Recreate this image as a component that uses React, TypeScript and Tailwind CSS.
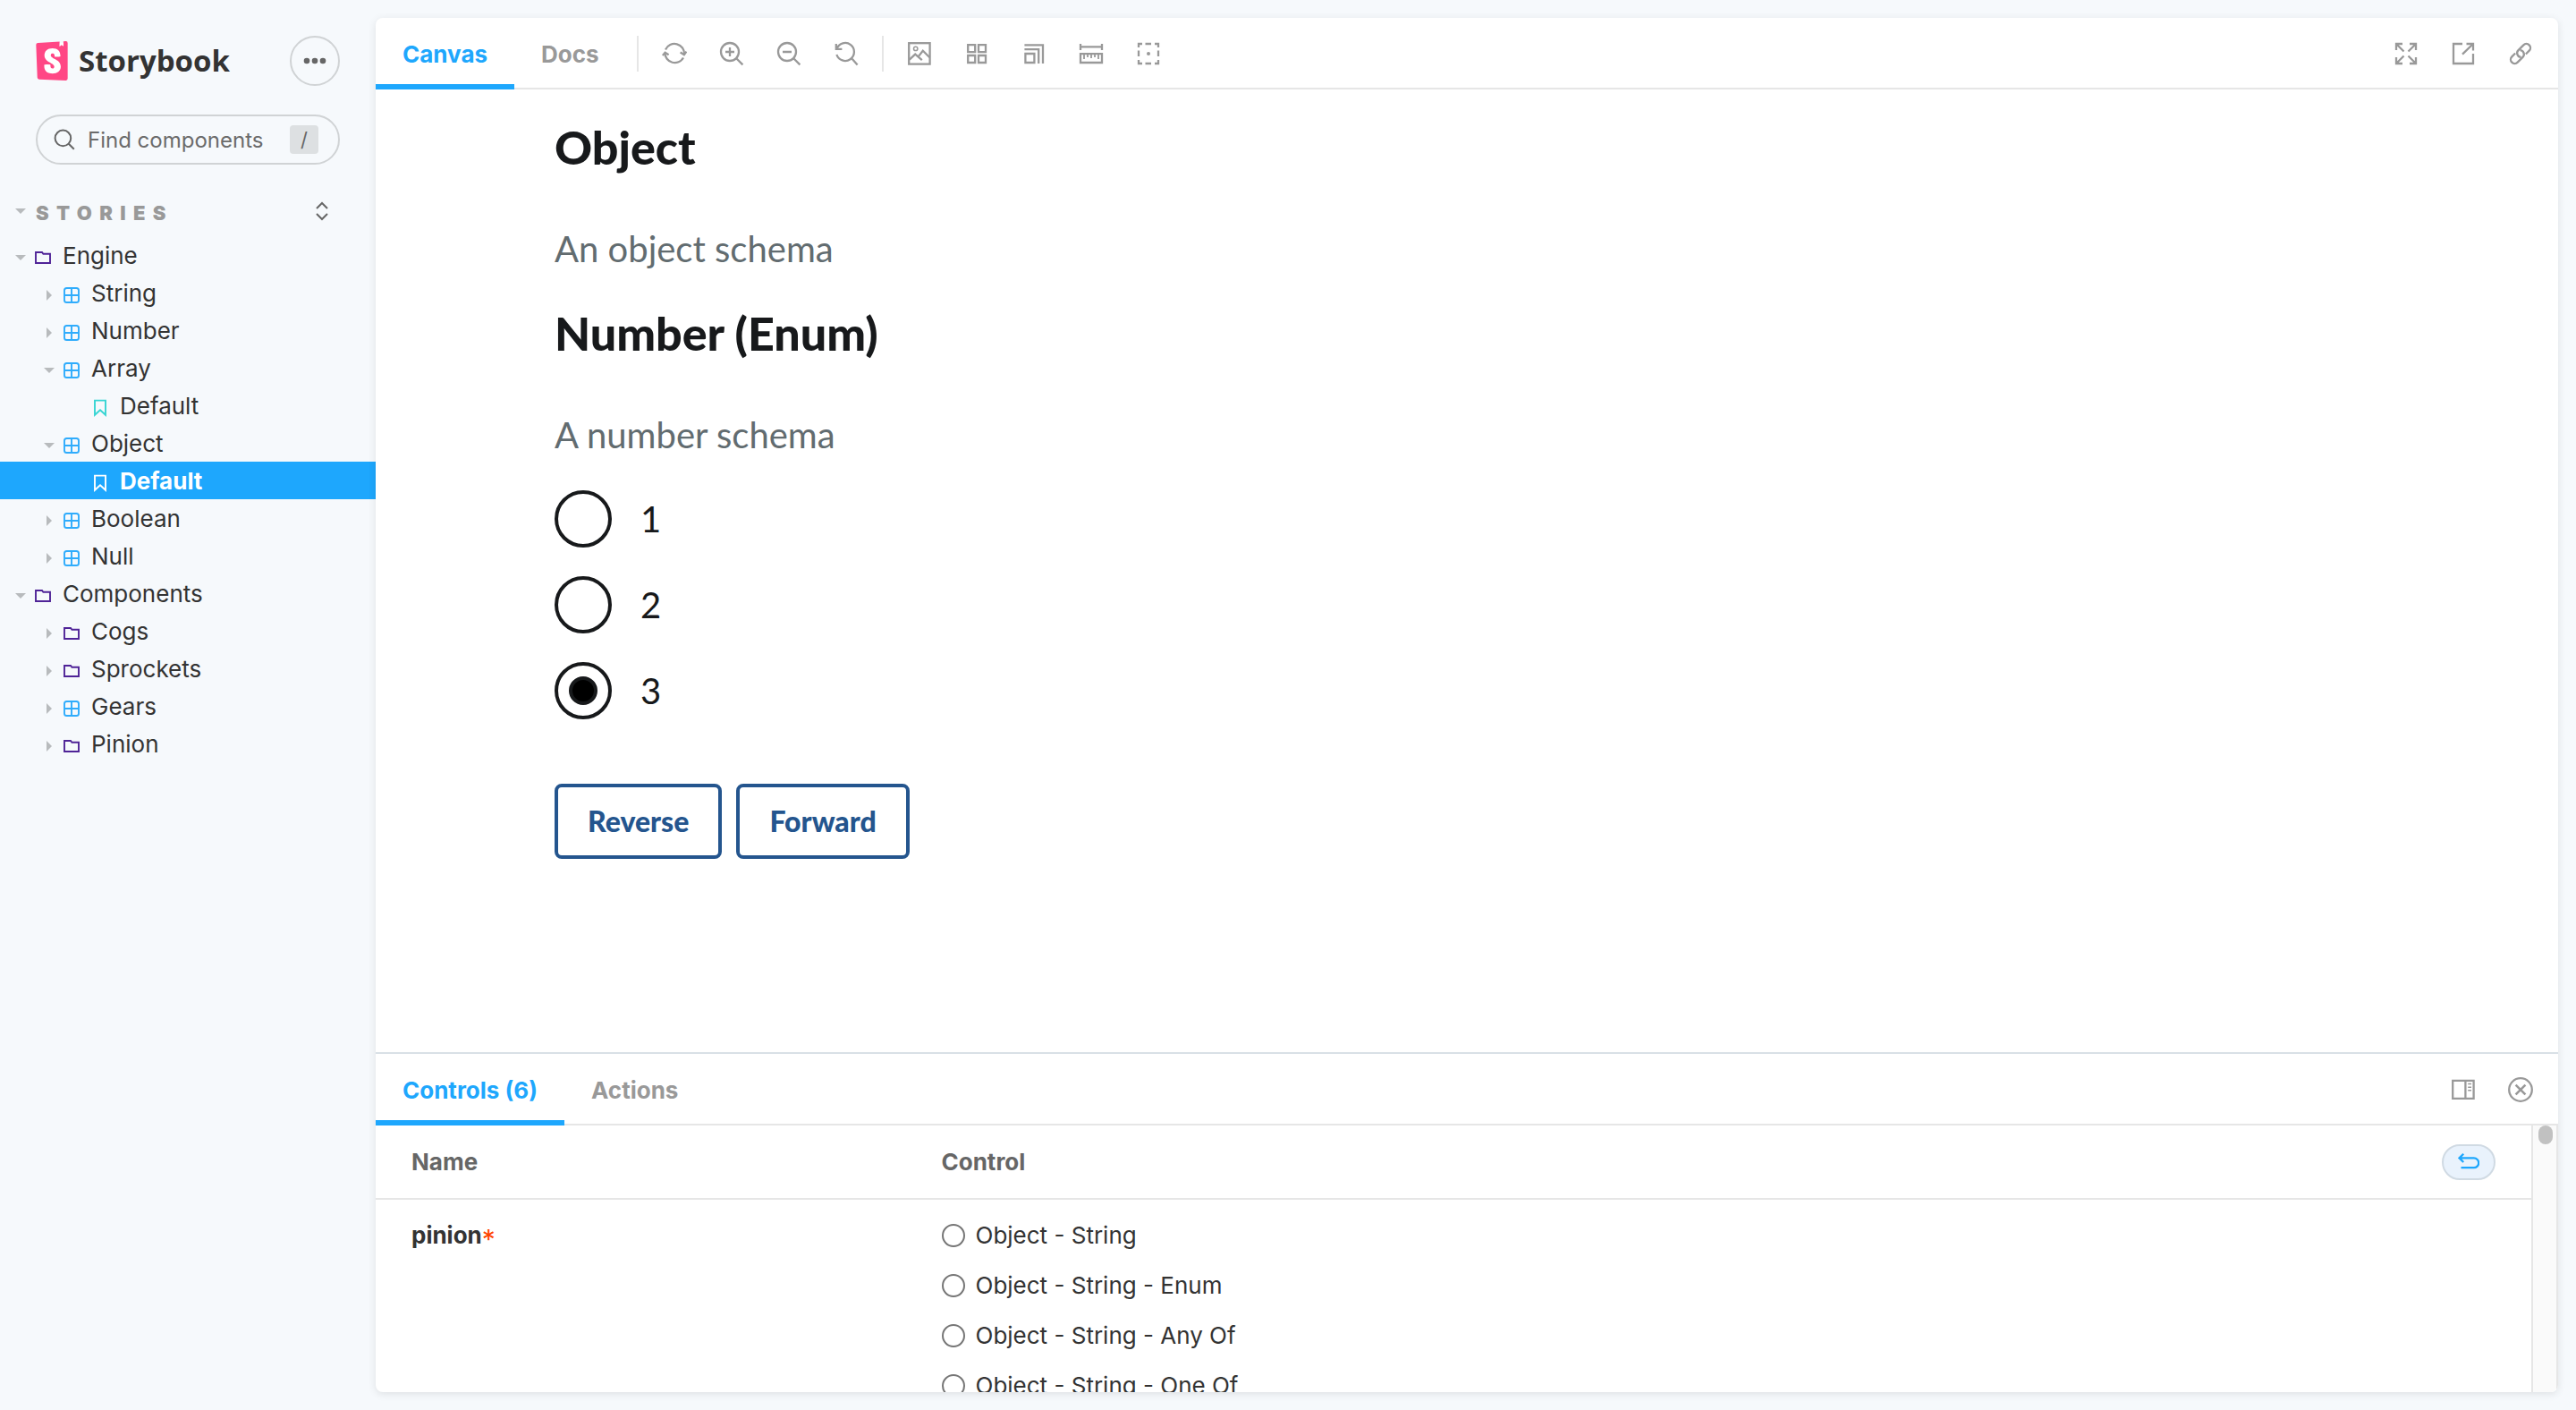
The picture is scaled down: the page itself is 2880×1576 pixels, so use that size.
import React, { useState } from 'react';

type NodeKind = 'group' | 'component' | 'story';

interface TreeNode {
  label: string;
  kind: NodeKind;
  depth: number;
  expanded?: boolean;
  selected?: boolean;
}

const TREE: TreeNode[] = [
  { label: 'Engine', kind: 'group', depth: 0, expanded: true },
  { label: 'String', kind: 'component', depth: 1 },
  { label: 'Number', kind: 'component', depth: 1 },
  { label: 'Array', kind: 'component', depth: 1, expanded: true },
  { label: 'Default', kind: 'story', depth: 2 },
  { label: 'Object', kind: 'component', depth: 1, expanded: true },
  { label: 'Default', kind: 'story', depth: 2, selected: true },
  { label: 'Boolean', kind: 'component', depth: 1 },
  { label: 'Null', kind: 'component', depth: 1 },
  { label: 'Components', kind: 'group', depth: 0, expanded: true },
  { label: 'Cogs', kind: 'group', depth: 1 },
  { label: 'Sprockets', kind: 'group', depth: 1 },
  { label: 'Gears', kind: 'component', depth: 1 },
  { label: 'Pinion', kind: 'group', depth: 1 },
];

const DEPTH_PADDING = ['pl-4', 'pl-12', 'pl-20'];

const PINION_OPTIONS = [
  'Object - String',
  'Object - String - Enum',
  'Object - String - Any Of',
  'Object - String - One Of',
];

function Icon({ children }: { children: React.ReactNode }) {
  return (
    <svg viewBox="0 0 28 28" className="size-7" fill="none" stroke="currentColor" strokeWidth="2.3" aria-hidden="true">
      {children}
    </svg>
  );
}

function ToolButton({ label, children }: { label: string; children: React.ReactNode }) {
  return (
    <button type="button" aria-label={label} className="flex size-14 items-center justify-center text-[#999999]">
      <Icon>{children}</Icon>
    </button>
  );
}

function Logo() {
  return (
    <svg viewBox="2.3 0 19.4 24" className="h-11 w-9" aria-hidden="true">
      <path d="M5 2.5L20.5.9V20H5z" fill="#fff" />
      <path
        fill="#ff4785"
        d="M16.71.243l-.12 2.71a.18.18 0 00.29.15l1.06-.8.9.7a.18.18 0 00.28-.14l-.1-2.76 1.33-.1a1.2 1.2 0 011.279 1.2v21.596a1.2 1.2 0 01-1.26 1.2l-16.096-.72a1.2 1.2 0 01-1.15-1.16l-.75-19.797a1.2 1.2 0 011.13-1.27L16.7.222zM13.64 9.3c0 .47 3.16.24 3.59-.08 0-3.2-1.72-4.89-4.859-4.89-3.15 0-4.899 1.72-4.899 4.29 0 4.45 5.999 4.53 5.999 6.959 0 .7-.32 1.1-1.05 1.1-.96 0-1.35-.49-1.3-2.16 0-.36-3.649-.48-3.769 0-.27 4.03 2.23 5.2 5.099 5.2 2.79 0 4.969-1.49 4.969-4.18 0-4.77-6.099-4.64-6.099-6.999 0-.97.72-1.1 1.13-1.1.45 0 1.25.07 1.19 1.87z"
      />
    </svg>
  );
}

function Caret({ expanded }: { expanded?: boolean }) {
  return (
    <svg viewBox="0 0 14 14" className="size-3.5 shrink-0 fill-[#b8bbbd]" aria-hidden="true">
      {expanded ? <path d="M1 4h12l-6 6z" /> : <path d="M4 1v12l6-6z" />}
    </svg>
  );
}

function NodeIcon({ kind, selected }: { kind: NodeKind; selected?: boolean }) {
  if (kind === 'group') {
    return (
      <svg viewBox="0 0 20 20" className="size-5" fill="none" stroke="#4f2397" strokeWidth="1.9" aria-hidden="true">
        <path d="M2 4h7l1.400 1.800h7.600V16H2z" />
      </svg>
    );
  }
  if (kind === 'component') {
    return (
      <svg viewBox="0 0 20 20" className="size-5" fill="none" stroke="#2facfc" strokeWidth="1.9" aria-hidden="true">
        <rect x="2" y="2" width="16" height="16" rx="2.6" />
        <path d="M10 2v16M2 10h16" />
      </svg>
    );
  }
  return (
    <svg
      viewBox="0 0 20 20"
      className="size-5"
      fill="none"
      stroke={selected ? '#ffffff' : '#37d5d3'}
      strokeWidth="1.9"
      aria-hidden="true"
    >
      <path d="M4 1.600h12v16.200l-6-5.600-6 5.600z" />
    </svg>
  );
}

function TreeRow({ node }: { node: TreeNode }) {
  return (
    <li>
      <a
        href="#story"
        aria-current={node.selected ? 'page' : undefined}
        className={`flex h-[42px] items-center ${DEPTH_PADDING[node.depth]} ${
          node.selected ? 'bg-[#1ea7fd] font-bold text-white' : 'text-[#333333]'
        }`}
      >
        <span className="flex items-center gap-2 pt-1.5">
          {node.kind === 'story' ? <span className="w-3.5" /> : <Caret expanded={node.expanded} />}
          <NodeIcon kind={node.kind} selected={node.selected} />
        </span>
        <span className="pt-0.5 pl-3">{node.label}</span>
      </a>
    </li>
  );
}

function Sidebar() {
  return (
    <aside className="w-[420px] shrink-0 pt-10">
      <header className="flex items-center justify-between pr-10 pl-10">
        <a href="#home" className="flex items-center gap-3">
          <Logo />
          <span className="font-['Open_Sans'] text-[33px] leading-[44px] font-bold text-[#333333]">Storybook</span>
        </a>
        <button
          type="button"
          aria-label="Shortcuts"
          className="flex size-14 items-center justify-center rounded-full border-2 border-[#d0d3d5] text-[#666666]"
        >
          <svg viewBox="0 0 28 28" className="size-7" fill="currentColor" aria-hidden="true">
            <circle cx="5" cy="14" r="3.3" />
            <circle cx="14" cy="14" r="3.3" />
            <circle cx="23" cy="14" r="3.3" />
          </svg>
        </button>
      </header>

      <label className="mx-10 mt-8 flex h-14 items-center rounded-full border-2 border-[#d0d3d5] pr-[22px] pl-[18px] text-[#666666]">
        <svg viewBox="0 0 24 24" className="size-6 shrink-0" fill="none" stroke="currentColor" strokeWidth="2" aria-hidden="true">
          <circle cx="10.4" cy="10.4" r="8.8" />
          <path d="M16.8 16.8l6 6" />
        </svg>
        <input
          type="text"
          aria-label="Search"
          placeholder="Find components"
          className="ml-3.5 min-w-0 flex-1 bg-transparent pt-0.5 text-[24px] leading-8 outline-none placeholder:text-[#6b6b6b]"
        />
        <kbd className="flex size-8 items-center justify-center rounded bg-[#dde0e2] font-['Inter'] text-[22px] leading-8">/</kbd>
      </label>

      <div className="mt-8 mb-2 flex h-10 items-center pr-[52px] pl-4">
        <Caret expanded />
        <h2 className="ml-2.5 flex-1 pt-1 text-[22px] leading-9 font-black tracking-[0.38em] text-[#999999]">STORIES</h2>
        <button type="button" aria-label="Expand all" className="text-[#666666]">
          <svg viewBox="0 0 16 24" className="h-6 w-4" fill="none" stroke="currentColor" strokeWidth="2" aria-hidden="true">
            <path d="M2 9l6-6 6 6M2 15l6 6 6-6" />
          </svg>
        </button>
      </div>

      <nav aria-label="Stories">
        <ul className="text-[26px] leading-8">
          {TREE.map((node, index) => (
            <TreeRow key={index} node={node} />
          ))}
        </ul>
      </nav>
    </aside>
  );
}

function Tab({ label, active }: { label: string; active?: boolean }) {
  return (
    <button
      type="button"
      role="tab"
      aria-selected={!!active}
      className={`h-20 border-y-6 border-t-transparent px-[30px] pt-0.5 text-[26px] leading-8 font-bold ${
        active ? 'border-b-[#1ea7fd] text-[#1ea7fd]' : 'border-b-transparent text-[#999999]'
      }`}
    >
      {label}
    </button>
  );
}

function Divider() {
  return <span className="mx-1 h-10 w-0.5 bg-[#e6e6e6]" />;
}

const BAR = 'flex h-20 shrink-0 items-center justify-between bg-[linear-gradient(to_top,#e6e6e6_2px,transparent_2px)]';

function Toolbar() {
  return (
    <div className={BAR}>
      <div className="flex items-center gap-2">
        <div role="tablist" className="flex">
          <Tab label="Canvas" active />
          <Tab label="Docs" />
        </div>
        <Divider />
        <ToolButton label="Remount component">
          <path d="M4 9.5A11 11 0 0 1 25 15" />
          <path d="M24 18.5A11 11 0 0 1 3.4 13" />
          <path d="M.8 16l2.800-3.200 4 2.400M20.600 12.600l4.200 2.600 2.600-3.600" />
        </ToolButton>
        <ToolButton label="Zoom in">
          <circle cx="12" cy="12" r="10" />
          <path d="M12 7v10M7 12h10M19 19l7.400 7.400" />
        </ToolButton>
        <ToolButton label="Zoom out">
          <circle cx="12" cy="12" r="10" />
          <path d="M7 12h10M19 19l7.400 7.400" />
        </ToolButton>
        <ToolButton label="Reset zoom">
          <path d="M3.600 8.400A10 10 0 1 1 3.400 15M2.800 3v5.800h6.600M20 19l6.600 7.400" />
        </ToolButton>
        <Divider />
        <ToolButton label="Change background">
          <rect x="2.2" y="2.2" width="23.4" height="23.4" />
          <circle cx="9.7" cy="8.4" r="2.2" strokeWidth="1.5" />
          <path d="M2.800 20.600l6.400-6 7.600 6.600M12.600 17.400l5.200-6.600 7.600 7.400" />
        </ToolButton>
        <ToolButton label="Apply grid">
          <path d="M4.200 4.200h8v8h-8zM16 4.200h8v8h-8zM4.200 16h8v8h-8zM16 16h8v8h-8z" />
        </ToolButton>
        <ToolButton label="Change viewport">
          <path d="M4.400 14h10v10h-10zM3.400 9.200h15.800V25M3.400 4.400H24V25" />
        </ToolButton>
        <ToolButton label="Measure">
          <path d="M2 3v7M26 3v7M2 6.400h24M2 14.200h24V24H2z" />
          <path d="M6 14v6M10 14v4M14 14v5M18 14v4M22 14v6" strokeWidth="1.800" />
        </ToolButton>
        <ToolButton label="Apply outlines">
          <path d="M3 7V3h4M10.500 3h6.500M21 3h4v4M25 10.500v6.500M25 21v4h-4M17 25h-6.500M7 25H3v-4M3 17v-6.500" />
          <circle cx="14" cy="14" r="2" fill="currentColor" stroke="none" />
        </ToolButton>
      </div>
      <div className="flex items-center gap-2 pr-3.5">
        <ToolButton label="Go full screen">
          <path d="M3 10V3h7M3 3l8.500 8.500M18 3h7v7M25 3l-8.500 8.500M3 18v7h7M3 25l8.500-8.500M18 25h7v-7M25 25l-8.500-8.500" />
        </ToolButton>
        <ToolButton label="Open canvas in new tab">
          <path d="M13 3H3v22h22V14M17.500 3H25v7.500M25 3L13 14.600" />
        </ToolButton>
        <ToolButton label="Copy canvas link">
          <g transform="translate(14 14) rotate(-45)">
            <path d="M3.800 4.500H9.200a4.500 4.500 0 0 0 0-9H1a4.500 4.500 0 0 0-3.300 7.600" />
            <path d="M-3.800-4.500H-9.200a4.500 4.500 0 0 0 0 9H-1a4.500 4.500 0 0 0 3.300-7.600" />
          </g>
        </ToolButton>
      </div>
    </div>
  );
}

function Preview() {
  const [value, setValue] = useState('3');
  return (
    <main className="min-h-0 flex-1 overflow-hidden pl-[200px] font-['Lato',sans-serif]">
      <h1 className="pt-[30px] text-[52px] leading-[68px] font-black text-[#17191b]">Object</h1>
      <p className="mt-12 text-[40px] leading-[64px] text-[#626c70]">An object schema</p>
      <form className="pt-7" onSubmit={(event) => event.preventDefault()}>
        <fieldset>
          <legend className="text-[52px] leading-[68px] font-black text-[#17191b]">Number (Enum)</legend>
          <p className="mt-12 text-[40px] leading-[64px] text-[#626c70]">A number schema</p>
          <div className="mt-[30px] flex flex-col items-start gap-8">
            {['1', '2', '3'].map((option) => (
              <label key={option} className="flex items-center gap-8 text-[40px] leading-[64px] text-[#17191b]">
                <input
                  type="radio"
                  name="number-enum"
                  value={option}
                  checked={value === option}
                  onChange={() => setValue(option)}
                  className="grid size-16 appearance-none place-items-center rounded-full border-4 border-[#17191b] bg-white before:size-8 before:rounded-full before:border-4 before:border-[#17191b] before:bg-black before:opacity-0 checked:before:opacity-100"
                />
                {option}
              </label>
            ))}
          </div>
        </fieldset>
        <div className="mt-[72px] flex gap-4">
          {['Reverse', 'Forward'].map((label) => (
            <button
              key={label}
              type="button"
              className="h-[84px] rounded-lg border-4 border-[#24558e] px-[33px] text-[32px] leading-10 font-black text-[#24558e]"
            >
              {label}
            </button>
          ))}
        </div>
      </form>
    </main>
  );
}

function Addons() {
  const [choice, setChoice] = useState('');
  return (
    <section aria-label="Addons" className="flex h-[380px] shrink-0 flex-col border-t-2 border-[#d9e0e6]">
      <div className={BAR}>
        <div role="tablist" className="flex">
          <Tab label="Controls (6)" active />
          <Tab label="Actions" />
        </div>
        <div className="flex items-center gap-2 pr-3.5">
          <ToolButton label="Change addon orientation">
            <path d="M2.200 3.800h23.400v20H2.200zM16.400 3.800v20" />
            <path d="M19.200 7.600h3.800M19.200 11.200h3.800M19.200 14.800h3.800" strokeWidth="1.500" />
          </ToolButton>
          <ToolButton label="Hide addons">
            <circle cx="14" cy="14" r="12.8" />
            <path d="M8.600 8.600l10.800 10.800M19.400 8.600L8.600 19.400" strokeWidth="2.600" />
          </ToolButton>
        </div>
      </div>
      <div className="flex min-h-0 flex-1">
        <div className="min-w-0 flex-1 overflow-hidden">
          <table className="w-full table-fixed border-collapse text-left text-[26px] text-[#333333]">
            <thead>
              <tr className="h-[82px] border-b-2 border-[#e6e6e6] leading-9 text-[#666666]">
                <th scope="col" className="w-1/4 pl-10 font-bold">Name</th>
                <th scope="col" className="pr-10 pl-[30px] font-bold">
                  <div className="flex items-center justify-between">
                    Control
                    <button
                      type="button"
                      aria-label="Reset controls"
                      className="flex h-10 w-[60px] items-center justify-center rounded-full border-2 border-[#d0dae3] bg-[#e9f2fc] text-[#1ea7fd]"
                    >
                      <svg viewBox="0 0 24 24" className="size-6" fill="none" stroke="currentColor" strokeWidth="2.3" aria-hidden="true">
                        <path d="M1.500 7.400h16.300a5.400 5.400 0 0 1 0 10.800H3.500M6.200 2.800L1.600 7.400l4.600 4.600" />
                      </svg>
                    </button>
                  </div>
                </th>
              </tr>
            </thead>
            <tbody>
              <tr className="align-top leading-9">
                <td className="pt-[22px] pl-10 font-bold">
                  pinion<span className="align-sub text-[30px] leading-none font-normal text-[#ff4400]">*</span>
                </td>
                <td className="pt-[22px] pl-[30px]">
                  <div className="flex flex-col items-start gap-5">
                    {PINION_OPTIONS.map((option) => (
                      <label key={option} className="flex items-center gap-3">
                        <input
                          type="radio"
                          name="pinion"
                          checked={choice === option}
                          onChange={() => setChoice(option)}
                          className="size-[26px] appearance-none rounded-full border-2 border-[#767676] bg-white checked:bg-[#1ea7fd]"
                        />
                        {option}
                      </label>
                    ))}
                  </div>
                </td>
              </tr>
            </tbody>
          </table>
        </div>
        <div className="w-[30px] shrink-0 border-x-2 border-[#e6e6e6] bg-[#fafafa] px-1">
          <div className="ml-auto h-[21px] w-4 rounded-full bg-[#c1c1c1]" />
        </div>
      </div>
    </section>
  );
}

export default function App() {
  return (
    <div className="flex h-screen bg-[#f6f9fc] font-['Inter',sans-serif]">
      <Sidebar />
      <div className="min-w-0 flex-1 py-5 pr-5">
        <div className="flex h-full flex-col overflow-hidden rounded-lg bg-white shadow-[0_2px_10px_rgba(0,0,0,0.1)]">
          <Toolbar />
          <Preview />
          <Addons />
        </div>
      </div>
    </div>
  );
}
